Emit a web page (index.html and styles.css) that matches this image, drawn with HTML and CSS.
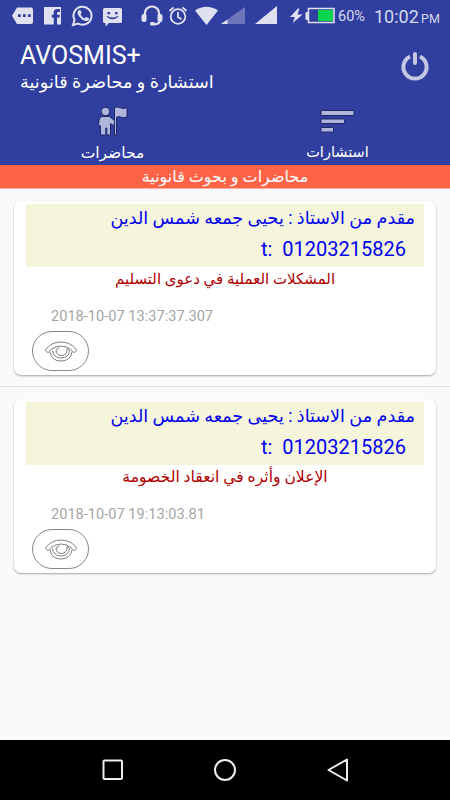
FILE: index.html
```html
<!DOCTYPE html>
<html lang="ar">
<head>
  <meta charset="UTF-8">
  <meta name="viewport" content="width=device-width, initial-scale=1.0">
  <title>AVOSMIS+</title>
  <link rel="stylesheet" href="styles.css">
</head>
<body>
  <div class="status-bar">
    <svg class="status-icons" width="268" height="32" viewBox="0 0 268 32" fill="#dfe1f1">
      <!-- more -->
      <path fill-rule="evenodd" d="M17 7.500h14q2 0 2 2v12.500q0 2-2 2H17l-5-8.250zM18 14.300v2.700h2.700v-2.700zm5 0v2.700h2.700v-2.700zm5 0v2.700h2.700v-2.700z"/>
      <!-- facebook -->
      <path fill-rule="evenodd" d="M44 7h17v17.500h-4v-7h2.700v-2.800H57v-1.500q0-1.200 1.300-1.200h1.600V9h-2.700q-3.500 0-3.500 3.600v2.100h-2v2.800h2v7H44z"/>
      <!-- whatsapp -->
      <path fill="none" stroke="#dfe1f1" stroke-width="2" d="M73 25l1.500-5.200A9 9 0 1 1 78 23.500z"/>
      <path d="M78.500 10.500c1-1.200 2-.7 2.300.2l.8 2c.2.700-.8 1.300-1 1.700 1 2 2.300 3.200 4.200 4 .6-.3 1-1.300 1.600-1.300l2.300 1.100c.8.500.3 1.800-.6 2.400-1.500 1-4 .3-6.500-1.700-2.300-1.900-4-4.300-4-6.100 0-.9.400-1.700.9-2.300z"/>
      <!-- message -->
      <path fill-rule="evenodd" d="M104.500 8h16q1.500 0 1.500 1.500v12q0 1.500-1.500 1.500H109l-3.500 3.500V23h-1q-1.500 0-1.500-1.500v-12q0-1.500 1.500-1.500zM107.500 12v2.300h2.500V12zm7.500 0v2.300h2.500V12zM106.500 16.500q6 5.500 12 0l-1-.5q-5 3-10 0z"/>
      <!-- headset -->
      <path fill="none" stroke="#dfe1f1" stroke-width="2.200" d="M145 16v-3a7 6.500 0 0 1 14 0v3M160 20q0 4-6 4.500"/>
      <rect x="141.500" y="14" width="5" height="8" rx="2"/>
      <rect x="157.500" y="14" width="5" height="8" rx="2"/>
      <rect x="150" y="22" width="5" height="3.500" rx="1.500"/>
      <!-- alarm -->
      <g fill="none" stroke="#dfe1f1" stroke-width="1.800">
        <circle cx="178" cy="16.500" r="7.300"/>
        <path d="M178 12v5l3.500 2.200M169.500 11l4-3.700M186.500 11l-4-3.700"/>
      </g>
      <!-- wifi and signal -->
      <path d="M195 10.500q11.500-7.500 23 0L206.500 25z"/>
      <path fill="#6d76ba" d="M245 7v17h-24z"/>
      <path d="M227.500 19.500V24H221z"/>
    </svg>
    <svg class="signal-icons" width="82" height="32" viewBox="253 0 82 32" fill="#dfe1f1">
      <path d="M277 6v18h-22z"/>
      <path d="M298 8.500l-8 8.500h4.800l-2 6 9.700-8.500h-5l2-6z"/>
      <rect x="305.500" y="12" width="3" height="8" rx="1"/>
      <rect x="308.500" y="8.500" width="25.500" height="14" fill="#303f9f" stroke="#dfe1f1" stroke-width="1.500"/>
      <rect x="318" y="10" width="15" height="11" fill="#0ad34e"/>
    </svg>
    <span class="battery">60%</span>
    <span class="clock">10:02</span>
    <span class="period">PM</span>
  </div>

  <header class="header">
    <div class="titles">
      <h1>AVOSMIS+</h1>
      <p dir="rtl">استشارة و محاضرة قانونية</p>
    </div>
    <svg class="power" width="30" height="32" viewBox="0 0 30 32" fill="none" stroke="#c3c7e4" stroke-width="4">
      <path d="M10 6.500A11.600 11.600 0 1 0 20 6.500"/>
      <path stroke-linecap="round" d="M15 4v9"/>
    </svg>
  </header>

  <nav class="tabs">
    <div class="tab">
      <svg width="32" height="32" viewBox="97.500 105 32 32" fill="#afb5dc" stroke="#1d2867" stroke-width="1">
        <path d="M115 107.500q3-1.200 6 .3t6.500-.3v9.500q-3 1.500-6 .2t-4.500.2V135h-2z"/>
        <path d="M102.500 116.500h7.500l5 4.200v5l-4-2v11.300h-3.700v-7h-1v7H101v-9l-2-1 .5-4.500q.500-4 3-4z"/>
        <circle cx="106" cy="111.500" r="4.200"/>
      </svg>
      <span class="tab-label" dir="rtl">محاضرات</span>
    </div>
    <div class="tab">
      <svg width="36" height="32" viewBox="320 105 36 32" fill="#afb5dc" stroke="#1d2867" stroke-width="1">
        <rect x="321" y="110.500" width="33" height="5" rx="1"/>
        <rect x="321" y="119" width="23.500" height="4.500" rx="1"/>
        <rect x="321" y="127.500" width="12.500" height="4.500" rx="1"/>
      </svg>
      <span class="tab-label consult" dir="rtl">استشارات</span>
    </div>
  </nav>

  <div class="banner" dir="rtl">محاضرات و بحوث قانونية</div>

  <main class="list">
    <article class="item">
      <div class="card">
        <div class="author">
          <p class="name" dir="rtl">مقدم من الاستاذ : يحيى جمعه شمس الدين</p>
          <p class="phone">t:&nbsp; 01203215826</p>
        </div>
        <h2 class="subject" dir="rtl">المشكلات العملية في دعوى التسليم</h2>
        <time class="date">2018-10-07 13:37:37.307</time>
        <button class="view" type="button" aria-label="عرض">
          <svg width="34" height="22" viewBox="0 0 34 22">
            <path d="M1.500 10Q7 2 17 2t15.500 8q-.5 2-2.500 2.500-2-.5-3-3Q22 6 17 6T7 9.500q-1 2.500-3 3-2-.5-2.500-2.500z"/>
            <path d="M6 12q1.500 9 11 9t11-9M8.500 10.500q1 7.500 8.500 7.500t8.500-7.500l-2.500-2q.5 7-6 7-4.500 0-5-5.500l3.500-2.500"/>
          </svg>
        </button>
      </div>
    </article>
    <article class="item">
      <div class="card">
        <div class="author">
          <p class="name" dir="rtl">مقدم من الاستاذ : يحيى جمعه شمس الدين</p>
          <p class="phone">t:&nbsp; 01203215826</p>
        </div>
        <h2 class="subject second" dir="rtl">الإعلان وأثره في انعقاد الخصومة</h2>
        <time class="date">2018-10-07 19:13:03.81</time>
        <button class="view" type="button" aria-label="عرض">
          <svg width="34" height="22" viewBox="0 0 34 22">
            <path d="M1.500 10Q7 2 17 2t15.500 8q-.5 2-2.500 2.500-2-.5-3-3Q22 6 17 6T7 9.500q-1 2.500-3 3-2-.5-2.500-2.500z"/>
            <path d="M6 12q1.500 9 11 9t11-9M8.500 10.500q1 7.500 8.500 7.500t8.500-7.500l-2.500-2q.5 7-6 7-4.500 0-5-5.500l3.500-2.500"/>
          </svg>
        </button>
      </div>
    </article>
  </main>

  <div class="nav-bar">
    <svg width="24" height="24" viewBox="0 0 24 24"><rect x="2.500" y="2.500" width="18.500" height="18.500" rx="1"/></svg>
    <svg width="24" height="24" viewBox="0 0 24 24"><circle cx="12" cy="12" r="10"/></svg>
    <svg width="24" height="24" viewBox="0 0 24 24"><path d="M21 1.500v21L2.500 12z"/></svg>
  </div>
</body>
</html>
```
FILE: styles.css
```css
* {
  box-sizing: border-box;
}
body {
  font-family: Roboto, "DejaVu Sans", sans-serif;
  margin: 0;
  height: 800px;
  background: #fafafa;
  display: flex;
  flex-direction: column;
  overflow: hidden;
}
h1, h2, p {
  margin: 0;
  font-weight: 400;
}
svg {
  display: block;
  flex: none;
}
.status-bar {
  height: 35px;
  background: #303f9f;
  color: #d6d9ed;
  display: flex;
  align-items: flex-start;
  white-space: nowrap;
}
.status-icons {
  margin-right: -15px;
}
.battery {
  width: 36px;
  padding-left: 3px;
  font-size: 14.500px;
  line-height: 33px;
}
.clock {
  width: 50px;
  padding-left: 3px;
  font-size: 18px;
  line-height: 33px;
}
.period {
  font-size: 12.500px;
  line-height: 37px;
}
.header {
  height: 65px;
  background: #303f9f;
  color: #fff;
  display: flex;
  justify-content: space-between;
  padding: 6px 20px 0;
}
.header h1 {
  font-size: 25px;
  line-height: 29px;
}
.header p {
  font-size: 17.700px;
  line-height: 24px;
  white-space: nowrap;
}
.power {
  margin-top: 9px;
}
.tabs {
  height: 65px;
  background: #303f9f;
  color: #fff;
  display: grid;
  grid-template-columns: 1fr 1fr;
}
.tab {
  display: flex;
  flex-direction: column;
  align-items: center;
  padding-top: 5px;
}
.tab-label {
  font-size: 15.500px;
  line-height: 32px;
}
.tab-label.consult {
  font-size: 14.500px;
}
.banner {
  height: 24px;
  background: #ff6347;
  border-bottom: 1px solid #f9b0a2;
  color: #fff;
  font-size: 16px;
  line-height: 23px;
  text-align: center;
}
.list {
  flex: 1;
}
.item {
  height: 198px;
  padding: 12px 14px 0;
}
.item:first-child {
  border-bottom: 1px solid #e2e2e2;
}
.card {
  height: 174px;
  padding: 3px 12px 0;
  background: #fff;
  border-radius: 7px;
  box-shadow: 0 1px 2px rgba(0,0,0,0.35);
  display: flex;
  flex-direction: column;
}
.author {
  height: 63px;
  background: #f5f5dc;
  color: #0000f0;
  padding: 1px 9px 0;
}
.name {
  font-size: 17.600px;
  line-height: 27px;
  white-space: nowrap;
}
.phone {
  padding-right: 9px;
  font-size: 20px;
  line-height: 34px;
  text-align: right;
}
.subject {
  font-size: 15px;
  line-height: 25px;
  color: #b00000;
  text-align: center;
}
.subject.second {
  font-size: 15.600px;
}
.date {
  margin: 14px 0 0 25px;
  font-size: 14.600px;
  line-height: 20px;
  color: #a5a5a5;
}
.view {
  width: 57px;
  height: 40px;
  margin: 5px 0 0 6px;
  padding: 0;
  background: #fff;
  border: 1px solid #888;
  border-radius: 20px;
  display: flex;
  align-items: center;
  justify-content: center;
}
.view svg {
  fill: none;
  stroke: #808080;
  stroke-width: 1;
}
.nav-bar {
  height: 60px;
  background: #000;
  display: flex;
  justify-content: center;
  align-items: center;
  gap: 88.500px;
}
.nav-bar svg {
  fill: none;
  stroke: #eee;
  stroke-width: 2;
  stroke-linejoin: round;
}
```
